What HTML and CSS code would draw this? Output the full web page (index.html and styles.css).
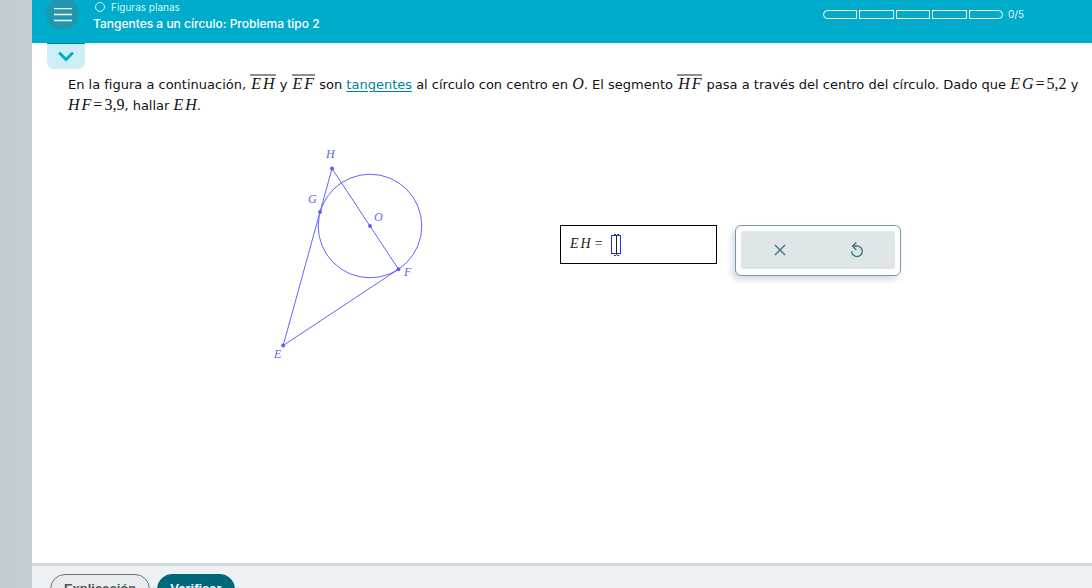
FILE: index.html
```html
<!DOCTYPE html>
<html lang="es">
<head>
<meta charset="utf-8">
<meta name="viewport" content="width=device-width, initial-scale=1">
<title>Tangentes a un círculo: Problema tipo 2</title>
<link rel="stylesheet" href="styles.css">
</head>
<body>
<div class="app">
  <div class="page">
    <header class="topbar">
      <button class="menu" type="button" aria-label="Menú"><svg width="18" height="14" viewBox="0 0 18 14"><path d="M0 .5h18M0 6.500h18M0 12.500h18" stroke="#fff" stroke-width="1.500"/></svg></button>
      <div class="titles">
        <div class="topic"><span class="ring"></span>Figuras planas</div>
        <h1 class="title">Tangentes a un círculo: Problema tipo 2</h1>
      </div>
      <div class="progress">
        <div class="steps"><span class="step"></span><span class="step"></span><span class="step"></span><span class="step"></span><span class="step"></span></div>
        <span class="count">0/5</span>
      </div>
    </header>
    <main class="content">
      <button class="collapse" type="button" aria-label="Mostrar"><svg width="16" height="11" viewBox="0 0 16 11"><path d="M2 2.500l6 6 6-6" fill="none" stroke="#00accb" stroke-width="3" stroke-linecap="round"/></svg></button>
      <p class="problem">En la figura a continuación, <span class="math seg"><i>E</i><i>H</i></span> y <span class="math seg"><i>E</i><i>F</i></span> son <a class="term" href="#tangentes">tangentes</a> al círculo con centro en <span class="math"><i>O</i></span>. El segmento <span class="math seg"><i>H</i><i>F</i></span> pasa a través del centro del círculo. Dado que <span class="math"><i>E</i><i>G</i><b>=</b><b>5,2</b></span> y <span class="math"><i>H</i><i>F</i><b>=</b><b>3,9</b></span>, hallar <span class="math"><i>E</i><i>H</i></span>.</p>
      <div class="work">
        <svg class="figure" width="180" height="230" viewBox="260 140 180 230" role="img" aria-label="Círculo con tangentes">
          <g fill="none" stroke="#6363ff" stroke-width="1"><circle cx="370" cy="226" r="51.8"/><path d="M332 168.500L283.200 345.500L398.500 269.200Z"/></g>
          <g fill="#5a5af5"><circle cx="332" cy="168.500" r="1.900"/><circle cx="320" cy="212" r="1.900"/><circle cx="370" cy="226" r="1.900"/><circle cx="398.500" cy="269.200" r="1.900"/><circle cx="283.200" cy="345.500" r="1.900"/></g>
          <g class="labels"><text x="326" y="158">H</text><text x="308" y="203">G</text><text x="374" y="221">O</text><text x="404" y="276">F</text><text x="274" y="358">E</text></g>
        </svg>
        <div class="answer">
          <label class="answer-label" for="eh"><i>E</i><i>H</i><span class="eq">=</span></label>
          <span class="field"><input class="box" id="eh" type="text"><svg class="cursor" width="7" height="24" viewBox="0 0 7 24"><path d="M1 1.500h1.500l1 1 1-1H6M3.500 2.500v19M1 22.500h1.500l1-1 1 1H6" fill="none" stroke="#222"/></svg></span>
        </div>
        <div class="toolbox">
          <div class="tools">
            <button class="tool" type="button" aria-label="Borrar"><svg width="14" height="14" viewBox="0 0 14 14"><path d="M2 2l10 10M12 2L2 12" stroke="#417584" stroke-width="1.400"/></svg></button>
            <button class="tool" type="button" aria-label="Deshacer"><svg width="14" height="16" viewBox="0 0 14 16"><path d="M1.700 9.300a5.300 5.300 0 1 0 5.300-5.300H2.600M6.300 .6L2.600 4L6.300 8" fill="none" stroke="#417584" stroke-width="1.400"/></svg></button>
          </div>
        </div>
      </div>
    </main>
    <footer class="actions">
      <button class="pill" type="button">Explicación</button>
      <button class="pill primary" type="button">Verificar</button>
    </footer>
  </div>
</div>
</body>
</html>
```
FILE: styles.css
```css
* { box-sizing: border-box; }
body { margin: 0; background: #c1cdd3; font-family: "DejaVu Sans", sans-serif; }
button { border: 0; padding: 0; font: inherit; }
svg { display: block; }
.app { height: 100vh; padding-left: 32px; overflow: hidden; background: linear-gradient(90deg, #bfccd2 14px, #c2ced4 14px); }
.page { height: 100%; display: flex; flex-direction: column; background: #fff; }
.topbar { flex: none; height: 43px; display: flex; align-items: flex-start; padding: 0 68px 0 14px; background: #00accb; color: #fff; font-family: Inter, sans-serif; }
.menu { flex: none; width: 33px; height: 33px; margin-top: -3px; display: grid; place-items: center; border-radius: 50%; background: #1e98b0; }
.menu svg { margin-top: 2px; }
.titles { flex: 1; padding-left: 14px; }
.topic { display: flex; align-items: center; gap: 6px; padding-left: 2px; font-size: 10px; line-height: 14px; color: #d5f3f8; }
.ring { width: 10px; height: 10px; border: 1px solid #d5f3f8; border-radius: 50%; }
.title { margin: 3px 0 0; font-size: 12px; line-height: 14px; font-weight: 500; }
.progress { display: flex; align-items: center; gap: 5px; padding-top: 8px; font-size: 10px; line-height: 13px; color: #e3f7fa; }
.steps { display: flex; gap: 2px; width: 180px; }
.step { flex: 1; height: 9px; border: 1px solid #fff; }
.step:first-child { border-radius: 5px 0 0 5px; }
.step:last-child { border-radius: 0 5px 5px 0; }
.content { flex: 1; min-height: 0; }
.collapse { display: grid; place-items: center; width: 38px; height: 26px; margin-left: 15px; border-top: 1px solid #087e95; border-radius: 0 0 7px 7px; background: #cdeef4; }
.problem { margin: 5px 4px 0 36px; font-size: 13px; line-height: 21px; color: #111; }
.term { color: #008299; text-underline-offset: 2px; }
.math { display: inline-flex; gap: 2px; font: 16px/16px "Liberation Serif", serif; }
.math b { font-weight: 400; }
.seg { border-top: 2px solid #8f8f8f; padding: 0 1px; }
.work { display: flex; align-items: flex-start; padding: 24px 0 0 228px; }
.figure { flex: none; }
.labels { font: italic 12px "Liberation Serif", serif; fill: #6363ee; }
.answer { flex: none; display: flex; align-items: flex-start; gap: 8px; width: 157px; height: 39px; margin: 85px 18px 0 120px; padding: 9px 9px 0; border: 1px solid #000; }
.answer-label { display: flex; gap: 2px; font: 14px/18px "Liberation Serif", serif; color: #222; }
.eq { margin-left: 2px; }
.field { position: relative; }
.box { display: block; width: 10px; height: 19px; padding: 0; border: 1px solid #2424ff; background: #fff; }
.cursor { position: absolute; top: -2px; left: 2px; }
.toolbox { flex: none; width: 166px; height: 51px; margin-top: 85px; padding: 5px 5px 6px; border: 1px solid #7299a5; border-radius: 6px; background: #fff; box-shadow: -3px 4px 6px #d4dfe3; }
.tools { height: 100%; display: grid; grid-template-columns: 1fr 1fr; border-radius: 3px; background: #dee6e8; }
.tool { display: grid; place-items: center; background: none; }
.actions { flex: none; height: 25px; display: flex; align-items: flex-start; gap: 7px; padding: 8px 18px 0; border-top: 3px solid #cfdade; background: #edf1f3; }
.pill { flex: none; width: 100px; height: 30px; padding: 0 0 2px; border: 1px solid #5d7479; border-radius: 15px; background: #e8ecee; color: #4a5557; font: bold 13px "Liberation Sans", sans-serif; }
.primary { width: 78px; border-color: #00687b; background: #00687b; color: #fff; }
```
